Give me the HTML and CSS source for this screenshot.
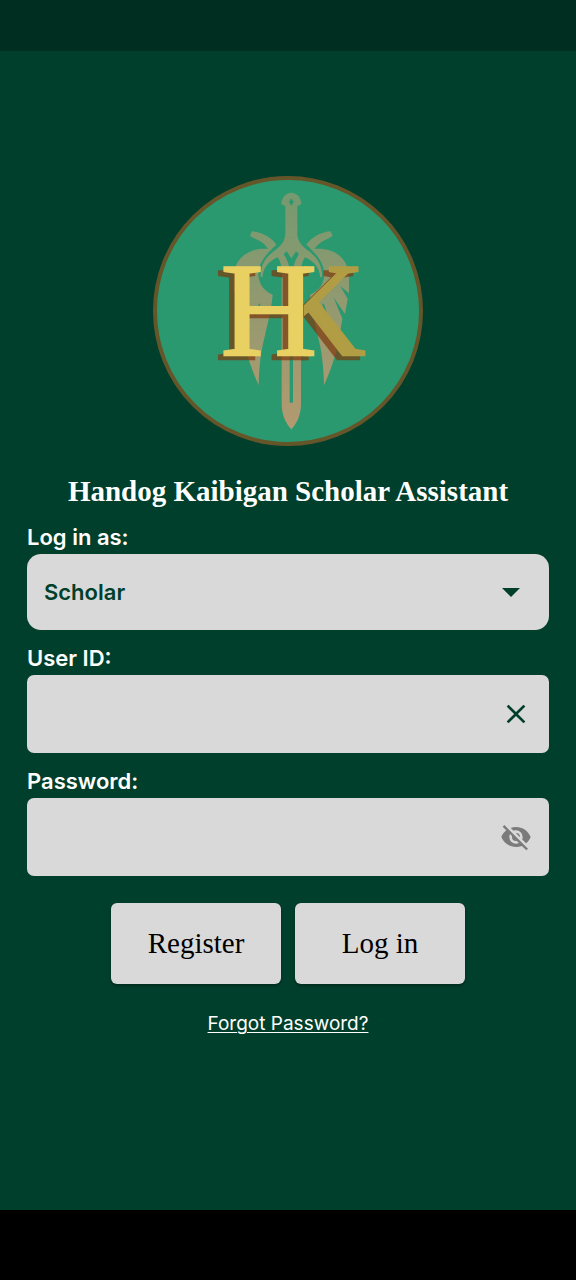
FILE: index.html
```html
<!DOCTYPE html>
<html lang="en">
<head>
<meta charset="utf-8">
<meta name="viewport" content="width=device-width, initial-scale=1">
<title>Handog Kaibigan Scholar Assistant</title>
<link rel="stylesheet" href="styles.css">
</head>
<body class="screen">
<div class="status-bar"></div>
<main class="content">
  <svg class="logo" viewBox="24 18 810 810" role="img" aria-label="HK emblem">
    <defs>
      <linearGradient id="bronze" gradientUnits="userSpaceOnUse" x1="0" y1="68" x2="0" y2="778">
        <stop offset="0" stop-color="#f09a70" stop-opacity=".38"/>
        <stop offset="1" stop-color="#f59a70" stop-opacity=".68"/>
      </linearGradient>
      <clipPath id="k-area"><rect x="476" y="270" width="220" height="310"/></clipPath>
      <clipPath id="k-shadow-area"><rect x="470" y="280" width="220" height="310"/></clipPath>
      <g id="half">
        <path d="M438 68C457 68 468 83 469 102L457 109V190C458 210 464 222 484 238C512 258 532 280 531 320L526 322C523 295 510 275 480 262C474 270 469 283 468 300V700C468 735 456 760 439 778H438V698H444V305C445 285 451 270 462 252L453 244L438 266V222V108L447 96L438 84Z"/>
        <path d="M557 184L563 197C545 212 530 207 508 237C560 232 612 258 612 325V370L585 347L608 386L600 432L565 381L592 446L582 505C573 560 553 610 537 646C536 590 530 540 519 500C510 460 500 425 495 374C525 362 538 338 538 310C536 278 515 252 484 224C500 202 525 187 557 184Z"/>
        <path fill="#000" d="M531 400L538 404L550 442L540 430Z"/>
      </g>
      <mask id="emblem" maskUnits="userSpaceOnUse" x="240" y="60" width="400" height="730">
        <g fill="#fff">
          <use href="#half"/>
          <use href="#half" transform="translate(878 0) scale(-1 1)"/>
        </g>
      </mask>
    </defs>
    <circle cx="429" cy="423" r="399" fill="#2b9970" stroke="#65562a" stroke-width="12"/>
    <rect x="240" y="60" width="400" height="730" fill="url(#bronze)" mask="url(#emblem)"/>
    <g class="logo-letters logo-shadow">
      <text x="211" y="567">H</text>
      <g clip-path="url(#k-shadow-area)"><text x="357" y="567">K</text></g>
    </g>
    <g class="logo-letters">
      <g clip-path="url(#k-area)"><text class="logo-k" x="373" y="555">K</text></g>
      <text class="logo-h" x="227" y="555">H</text>
    </g>
  </svg>
  <h1 class="title">Handog Kaibigan Scholar Assistant</h1>
  <form class="form">
    <div class="field">
      <label class="label" for="role">Log in as:</label>
      <div class="control">
        <select class="box box-select" id="role"><option>Scholar</option></select>
        <svg class="arrow" viewBox="0 0 18 9" aria-hidden="true"><path d="M0 0H18L9 9Z"/></svg>
      </div>
    </div>
    <div class="field">
      <label class="label" for="user">User ID:</label>
      <div class="control">
        <input class="box" id="user" type="text">
        <button class="icon-button" type="button" aria-label="Clear">
          <svg class="icon" viewBox="0 0 24 24"><path d="M19 6.41L17.59 5L12 10.59L6.41 5L5 6.41L10.59 12L5 17.59L6.41 19L12 13.41L17.59 19L19 17.59L13.41 12Z"/></svg>
        </button>
      </div>
    </div>
    <div class="field">
      <label class="label" for="password">Password:</label>
      <div class="control">
        <input class="box" id="password" type="password">
        <button class="icon-button icon-muted" type="button" aria-label="Show password">
          <svg class="icon" viewBox="0 0 24 24"><path d="M11.83 9L15 12.16C15 12.11 15 12.05 15 12A3 3 0 0 0 12 9C11.94 9 11.89 9 11.83 9M7.53 9.8L9.08 11.35C9.03 11.56 9 11.77 9 12A3 3 0 0 0 12 15C12.22 15 12.44 14.97 12.65 14.92L14.2 16.47C13.53 16.8 12.79 17 12 17A5 5 0 0 1 7 12C7 11.21 7.2 10.47 7.53 9.8M2 4.27L4.28 6.55L4.73 7C3.08 8.3 1.78 10 1 12C2.73 16.39 7 19.5 12 19.5C13.55 19.5 15.03 19.2 16.38 18.66L16.81 19.08L19.73 22L21 20.73L3.27 3M12 7A5 5 0 0 1 17 12C17 12.64 16.87 13.26 16.64 13.82L19.57 16.75C21.07 15.5 22.27 13.86 23 12C21.27 7.61 17 4.5 12 4.5C10.6 4.5 9.26 4.75 8 5.2L10.17 7.35C10.74 7.13 11.35 7 12 7Z"/></svg>
        </button>
      </div>
    </div>
    <div class="actions">
      <button class="action" type="button">Register</button>
      <button class="action" type="submit">Log in</button>
    </div>
  </form>
  <a class="forgot" href="#">Forgot Password?</a>
</main>
<div class="nav-bar"></div>
</body>
</html>
```
FILE: styles.css
```css
* {
  box-sizing: border-box;
}

.screen {
  margin: 0;
  min-height: 100vh;
  display: flex;
  flex-direction: column;
  background: #003f2b;
  color: #fff;
  font-family: Inter, "Liberation Sans", sans-serif;
}

.status-bar {
  height: 51px;
  background: #002e20;
}

.nav-bar {
  height: 70px;
  background: #000;
}

.content {
  flex: 1;
  display: flex;
  flex-direction: column;
  align-items: center;
  padding: 125px 27px 32px;
}

.logo {
  width: 270px;
  height: 270px;
}

.logo-letters {
  font-family: "Liberation Serif", serif;
  font-size: 400px;
  stroke-width: 7px;
}

.logo-shadow {
  fill: #7e390c;
  stroke: #7e390c;
  opacity: .7;
}

.logo-k {
  fill: #b09d44;
  stroke: #b09d44;
}

.logo-h {
  fill: #e9d062;
  stroke: #e9d062;
}

.title {
  margin: 27px 0 0;
  font: bold 29px/36px "Liberation Serif", serif;
  text-align: center;
}

.form {
  width: 100%;
  display: flex;
  flex-direction: column;
  gap: 13px;
  margin-top: 13px;
}

.field {
  display: flex;
  flex-direction: column;
}

.label {
  font-size: 22px;
  line-height: 30px;
  font-weight: 600;
  padding-bottom: 2px;
}

.control {
  display: grid;
  align-items: center;
}

.control > * {
  grid-area: 1 / 1;
}

.box {
  width: 100%;
  height: 78px;
  padding: 0 64px 0 17px;
  border: 0;
  border-radius: 7px;
  background: #d9d9d9;
  color: #003f2b;
  font: 600 22px Inter, "Liberation Sans", sans-serif;
}

.box-select {
  appearance: none;
  height: 76px;
  border-radius: 14px;
}

.arrow {
  width: 18px;
  height: 9px;
  margin-right: 29px;
  justify-self: end;
  fill: #003f2b;
  pointer-events: none;
}

.icon-button {
  display: flex;
  justify-self: end;
  margin-right: 17px;
  padding: 0;
  border: 0;
  background: none;
  color: #003f2b;
}

.icon-muted {
  color: #7b7b7b;
}

.icon {
  width: 32px;
  height: 32px;
  fill: currentColor;
}

.actions {
  display: flex;
  justify-content: center;
  gap: 14px;
  padding-top: 14px;
}

.action {
  width: 170px;
  height: 81px;
  border: 0;
  border-radius: 6px;
  background: #d9d9d9;
  color: #000;
  font: 29px "Liberation Serif", serif;
  box-shadow: 0 2px 3px rgba(0, 0, 0, .3);
}

.forgot {
  margin-top: 27px;
  color: #fff;
  font-size: 19px;
  line-height: 26px;
  text-decoration: underline;
  text-underline-offset: 2px;
  text-decoration-thickness: 1px;
}
```
